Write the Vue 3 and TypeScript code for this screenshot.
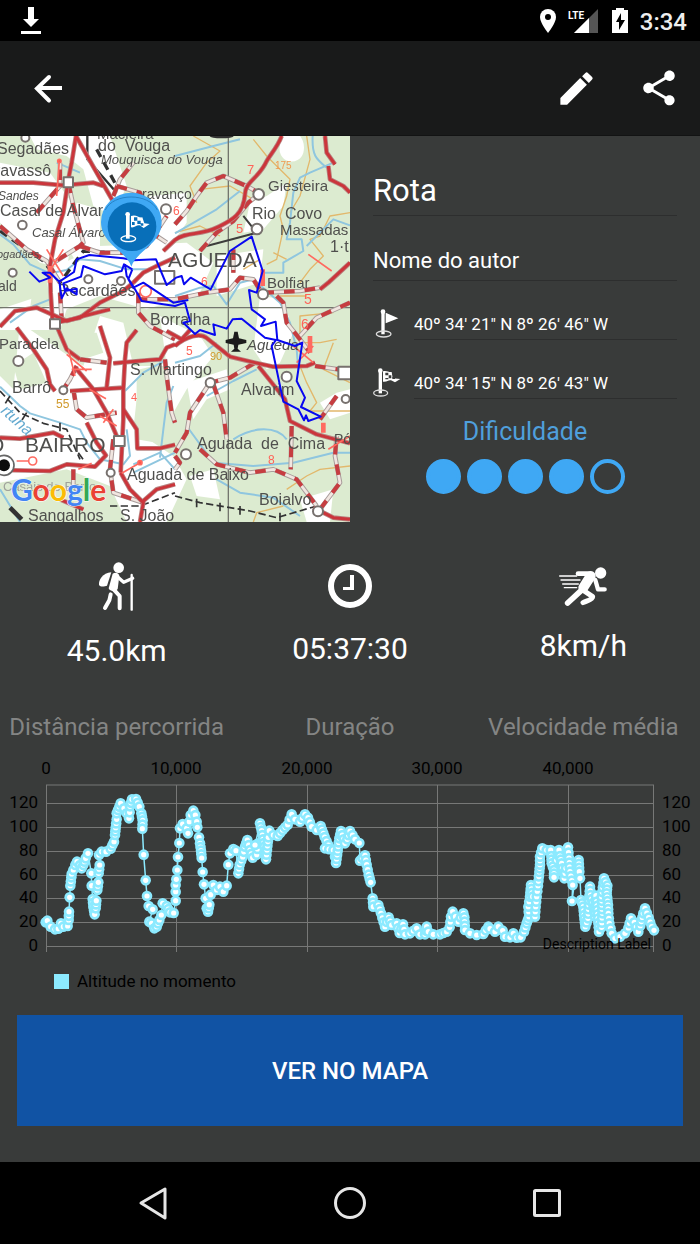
<script setup lang="ts">
import { ref } from 'vue'

interface MapLabel {
  x: number
  y: number
  t: string
  s: number
  c?: string
}

const routeName = ref('Rota')
const author = ref('Nome do autor')
const start = ref('40º 34\' 21" N 8º 26\' 46" W')
const end = ref('40º 34\' 15" N 8º 26\' 43" W')
const difficulty = 4

const labels: MapLabel[] = [
  { x: -3, y: 18, t: 'Segadães', s: 16 },
  { x: -5, y: 40, t: 'ravassô', s: 16 },
  { x: -2, y: 64, t: 'Sandes', s: 12, c: 'it' },
  { x: 0, y: 80, t: 'Casal de Alvar', s: 16 },
  { x: 32, y: 101, t: 'Casal Álvaro', s: 13, c: 'it' },
  { x: 97, y: 3, t: 'Macieira', s: 15 },
  { x: 98, y: 15, t: 'do  Vouga', s: 16 },
  { x: 101, y: 28, t: 'Mouquisca do Vouga', s: 13, c: 'it' },
  { x: 142, y: 63, t: 'ravanço', s: 14 },
  { x: -3, y: 122, t: 'ogadães', s: 11, c: 'it' },
  { x: -2, y: 155, t: 'ald', s: 14 },
  { x: 58, y: 160, t: 'Recardães', s: 16 },
  { x: 150, y: 189, t: 'Borralha', s: 16 },
  { x: 268, y: 55, t: 'Giesteira', s: 15 },
  { x: 252, y: 83, t: 'Rio  Covo', s: 16 },
  { x: 280, y: 99, t: 'Massadas', s: 15 },
  { x: 168, y: 131, t: 'AGUEDA', s: 21 },
  { x: 267, y: 152, t: 'Bolfiar', s: 15 },
  { x: -1, y: 213, t: 'Paradela', s: 15 },
  { x: 12, y: 257, t: 'Barrô', s: 16 },
  { x: 25, y: 316, t: 'BAIRRO', s: 21 },
  { x: -12, y: 316, t: 'O', s: 21 },
  { x: 130, y: 239, t: 'S. Martingo', s: 16 },
  { x: 127, y: 344, t: 'Aguada de Baixo', s: 16 },
  { x: 28, y: 385, t: 'Sangalhos', s: 16 },
  { x: 120, y: 385, t: 'S. João', s: 16 },
  { x: 247, y: 214, t: 'Agueda', s: 15, c: 'it' },
  { x: 241, y: 259, t: 'Alvarim', s: 16 },
  { x: 197, y: 313, t: 'Aguada  de  Cima', s: 16 },
  { x: 334, y: 308, t: 'Pó', s: 14 },
  { x: 259, y: 369, t: 'Boialvo', s: 16 },
  { x: 330, y: 116, t: '1·t', s: 16 },
  { x: 3, y: 355, t: 'Casais do Barro', s: 13, c: 'faint' },
  { x: 56, y: 272, t: '55', s: 12, c: 'gold' },
  { x: 210, y: 224, t: '90', s: 11, c: 'gold' },
  { x: 275, y: 33, t: '175', s: 10, c: 'orange' },
  { x: 304, y: 168, t: '5', s: 14, c: 'red' },
  { x: 301, y: 193, t: '6', s: 14, c: 'red' },
  { x: 236, y: 97, t: '5', s: 13, c: 'red' },
  { x: 247, y: 38, t: '7', s: 13, c: 'red' },
  { x: 201, y: 150, t: '6', s: 12, c: 'red' },
  { x: 268, y: 328, t: '8', s: 12, c: 'red' },
  { x: 186, y: 219, t: '5', s: 12, c: 'red' },
  { x: 173, y: 79, t: '6', s: 12, c: 'red' },
  { x: 131, y: 265, t: '4', s: 11, c: 'red' },
]

const mainRoads: string[] = [
  'M228 0L215 80 205 130 190 230 165 310 150 390 152 470 158 560',
  'M0 140L100 140 190 148 280 140 310 150',
  'M228 0L290 110 330 180 350 215',
  'M845 0C830 40 805 60 795 85C770 130 735 140 735 175C730 240 690 255 650 275C600 300 560 285 525 312L490 345',
  'M0 572L45 525 110 515 200 555 250 540 330 520',
  'M160 562L240 545 300 500 370 465 400 440',
  'M400 440L430 410 470 390 525 365',
  'M525 630C560 600 600 590 620 606L690 662 765 680 820 692 920 690 945 680',
  'M775 690L815 740 855 790 870 855 950 895 1050 922',
  'M50 575L100 640 140 700 150 745 165 765',
  'M170 570L200 640 240 670',
  'M300 570L330 665 320 755',
  'M210 765L370 755',
  'M410 582L380 620 375 670 370 760 370 850 362 1010',
  'M340 682L450 672 480 670 500 635 525 625',
  'M230 700L280 760 320 830 350 900',
  'M370 820L410 880 412 937 480 937 525 926',
  'M260 860L290 920 318 958 285 992 200 985 150 1005 0 1002',
  'M0 905L60 908 160 890 190 905',
  'M362 1010L390 1060 430 1100 420 1158',
  'M430 1095L470 1060 525 1045',
  'M975 0L980 50 1005 85M985 90L990 130 1030 150 1050 170',
  'M1050 380L985 440 960 460',
  'M500 585L545 610 570 582',
  'M180 1090L250 1120',
  'M940 1115L1000 1145 1050 1150',
]

const minorRoads: string[] = [
  'M525 265L560 225 590 180 620 140 670 120 740 150 775 170',
  'M600 345L650 290 700 255 745 200 770 180',
  'M410 490L525 490 620 470 690 460 720 425 760 430 785 470',
  'M830 480L850 500 860 560 900 610 930 650',
  'M765 680L690 725 630 740 590 800 570 830 560 890 525 950',
  'M640 745L670 830 680 910',
  'M875 870L872 1000',
  'M600 940L650 985 750 1010 820 1000 890 1030 950 1110',
  'M960 1120L1020 1040 1005 960 1010 900',
  'M495 670L500 720 515 830 525 860',
  'M220 760L230 820 260 845 350 830',
  'M415 470L415 530 450 570 525 610',
  'M945 690L1015 700',
  'M1050 500L950 545 900 600',
  'M790 470L900 465 960 455',
  'M110 230L180 150 180 80',
  'M205 140L220 210 250 320 240 330 160 380',
  'M240 330L300 350 380 350 440 330 500 240',
  'M340 180L360 130 400 80',
  'M350 150L420 170 440 230 470 300 500 320',
  'M0 270L80 340 140 375 180 440',
  'M220 1000L220 1060',
  'M230 690L210 730 190 760',
  'M240 670L320 680',
  'M340 910L330 1000 340 1070 430 1100',
  'M180 470L185 550',
  'M525 960L540 980 525 1000',
  'M700 340L700 410',
  'M1010 780L960 850',
]

const blues: string[] = [
  'M0 295L40 325 90 385 150 412 200 402 240 370 300 375 380 400 440 400',
  'M0 752L60 810 90 832 180 860 240 880 260 920 300 970 370 985 390 960 380 880',
  'M938 0C935 60 950 70 980 95M1000 80L930 110 900 125 880 170 870 260 860 310 905 310 910 345 850 380 850 410 790 410',
  'M1050 268L1000 250 960 290 920 330',
  'M525 292L650 220 720 165M525 60L640 30 720 10',
  'M525 480L600 455 640 450 680 505 720 440 760 430 840 500 870 560 890 640 895 700',
  'M375 765L430 710 500 670',
  'M480 965L490 880 500 800 520 750',
  'M525 1000L480 950 400 985',
  'M620 780L700 735 770 700',
  'M700 910C760 870 830 870 860 910',
  'M650 1030L720 1070 820 1085 900 1140',
  'M560 870L640 980 760 990 880 980 1000 950 1050 950',
  'M30 560L100 510 150 490M170 80L240 110',
  'M0 1060L60 1158M400 1010L525 950',
  'M525 680L600 660 650 620',
]

const contours: string[] = [
  'M580 0L660 45 620 80 570 150 590 200',
  'M760 10L800 60 870 130 860 180 840 240 850 280 830 370 800 385',
  'M920 0L930 70 900 180 870 230',
  'M600 160L690 150 760 190',
  'M1050 230L990 240 960 300 930 310 970 360 930 400 900 440',
  'M525 290L600 270 660 300',
  'M1000 530L900 540 900 620 960 620 1010 610',
  'M900 690L920 740 950 800 930 825 1050 825',
  'M860 1060L920 1020 960 1000 1050 990',
  'M760 1158L770 1130 850 1110',
  'M840 480L920 480M730 400L780 370M820 350L860 370',
  'M1000 620L970 700 1050 740',
]

const track =
  'M88 407L118 437 150 425 128 410 150 410 178 437 185 487 200 457 230 475 230 458 195 465 190 442 243 422 250 390 315 415 365 405 372 385 397 400 M178 437L222 408 230 370 268 357 370 367 400 373 468 370 500 447 528 425 545 420 552 445 572 425 632 460 690 345 755 302 788 405 770 470 747 462 755 520 795 550 783 570 827 557 832 612 885 630 907 620 890 735 915 785 903 813 962 842 925 855 918 838 912 853 895 820 850 797 815 630 828 612 795 605 725 548 698 550 680 578 640 565 645 597 600 582 585 594 550 560 570 555 555 500 525 510 425 495 405 460 380 420 375 385 M397 400L385 430 400 455 430 440 520 500 565 492'

/* Recorded track altitude: [x, y] samples in thirds of a chart unit. */
const profile: number[][] = [
  [137,517],[142,512],[152,530],[165,538],[175,536],[183,520],[190,530],[203,528],[206,510],[207,485],[209,442],[211,407],[214,382],[215,372],[220,360],[226,345],[231,335],[240,345],[245,355],[250,345],[257,325],[264,310],
  [274,370],[275,407],[278,447],[280,470],[284,493],[287,475],[289,452],[292,420],[295,397],[296,370],[299,345],[297,315],[305,305],[318,305],[332,296],[342,275],[345,255],[347,233],[350,208],[350,190],[358,170],[362,160],[372,175],[380,190],[387,205],[389,187],[390,169],[396,148],[408,147],[418,170],[424,190],[428,211],[427,236],[431,314],[437,391],[441,438],[446,468],[458,478],[448,515],[455,520],[463,535],[470,530],[478,510],[484,495],[488,460],[500,468],[510,487],[521,489],[527,452],[527,425],[527,405],[529,388],[532,360],[534,321],[538,279],[540,235],[548,222],[560,235],[564,250],[568,215],[572,195],[580,182],[586,195],[590,215],[592,232],[597,262],[600,280],[603,302],[605,324],[608,366],[612,403],[617,445],[620,475],[624,485],[628,464],[632,434],[640,405],[650,420],[660,410],[670,425],[680,407],[685,344],[690,310],[700,297],[708,302],[715,370],[719,344],[728,321],[735,290],[742,270],[750,300],[758,323],[770,314],[775,280],[765,285],[780,220],[785,242],[789,268],[793,290],[798,328],[801,300],[805,262],[808,242],[820,255],[833,258],[848,240],[863,224],[875,193],[885,208],[900,215],[915,193],[924,203],[935,230],[950,240],[962,228],[974,261],[985,285],[975,295],[1000,300],[1005,320],[1008,339],[1013,302],[1018,265],[1023,243],[1035,280],[1042,268],[1050,243],
  [1065,268],[1078,279],[1080,332],[1095,316],[1100,344],[1106,374],[1112,397],[1118,445],[1120,470],[1135,465],[1143,490],[1155,530],[1166,502],[1175,525],[1190,520],[1199,549],[1209,523],[1215,553],[1230,550],[1250,535],[1260,553],[1275,553],[1280,530],[1285,545],[1300,553],[1320,553],[1340,545],[1349,532],[1353,500],[1358,485],[1375,515],[1390,490],[1393,502],[1395,540],[1410,550],[1430,555],[1450,552],[1465,530],[1470,536],[1485,545],[1495,530],[1508,542],[1515,560],[1530,562],[1540,550],[1550,563],[1562,562],[1572,545],[1580,520],[1587,500],[1585,470],[1590,440],[1593,405],[1598,440],[1605,500],[1607,470],[1610,440],[1614,407],[1618,366],[1620,344],[1620,320],[1627,295],[1640,300],[1652,300],[1654,318],[1655,340],[1662,360],[1662,382],[1670,330],[1677,300],[1680,318],[1685,340],[1693,385],[1698,355],[1704,292],[1707,324],[1710,365],[1718,405],[1716,453],[1730,350],[1736,330],[1738,365],[1740,385],[1743,450],[1750,470],[1752,495],[1756,530],[1764,505],[1770,410],[1772,435],[1778,460],[1785,500],[1788,437],[1790,455],[1792,480],[1797,545],[1805,532],[1807,490],[1805,440],[1812,385],[1822,407],[1820,430],[1824,465],[1825,490],[1828,520],[1835,550],[1845,565],[1860,560],[1875,550],[1885,534],[1893,505],[1903,517],[1915,545],[1921,527],[1930,490],[1935,475],[1946,503],[1955,530],[1962,541],
]

const samples: number[][] = []
profile.forEach((p, i) => {
  if (i > 0) {
    const q = profile[i - 1]
    const d = Math.hypot(p[0] - q[0], p[1] - q[1])
    const steep = Math.abs(p[1] - q[1]) > 26 && p[0] < 720
    const n = steep || (d > 46 && p[0] < 1760) ? 1 : Math.max(1, Math.round(d / 14))
    for (let k = 1; k < n; k++) {
      samples.push([q[0] + ((p[0] - q[0]) * k) / n, q[1] + ((p[1] - q[1]) * k) / n])
    }
  }
  samples.push(p)
})
const dots = samples.map(([x, y]) => ({ x: x / 3, y: y / 3 }))
const line = dots.map((d) => `${d.x},${d.y}`).join(' ')

const xTicks = [
  { x: 46, t: '0' },
  { x: 176, t: '10,000' },
  { x: 307, t: '20,000' },
  { x: 437, t: '30,000' },
  { x: 568, t: '40,000' },
]
const yTicks = [
  { y: 53, t: '120' },
  { y: 77, t: '100' },
  { y: 101, t: '80' },
  { y: 125, t: '60' },
  { y: 148, t: '40' },
  { y: 172, t: '20' },
  { y: 196, t: '0' },
]
</script>

<template>
  <div class="screen">
    <div class="status">
      <svg class="dl" width="20" height="28" viewBox="0 0 20 28" aria-hidden="true">
        <path d="M7 0h6v12h5l-8 8-8-8h5z M0 24h20v3H0z" fill="#fff" />
      </svg>
      <svg class="sys" width="90" height="26" viewBox="0 0 90 26" aria-hidden="true">
        <path d="M9 1a8 8 0 0 0-8 8c0 6 8 16 8 16s8-10 8-16a8 8 0 0 0-8-8z" fill="#fff" />
        <circle cx="9" cy="9" r="3" fill="#000" />
        <path d="M59 1V25H35z" fill="#555" />
        <path d="M29 0h17v13H29z" fill="#000" />
        <path d="M50 10V25H35z" fill="#fff" />
        <text x="29" y="11" class="lte">LTE</text>
        <path d="M73 2h4V0h8v2h4v23H73z" fill="#fff" />
        <path d="M82 5l-5 9h3v8l6-10h-4z" fill="#000" />
      </svg>
      <span class="clock">3:34</span>
    </div>

    <header class="toolbar">
      <button class="icon-btn" aria-label="Voltar">
        <svg width="42" height="42" viewBox="0 0 42 42">
          <path d="M35 21H10" stroke="#fff" stroke-width="4" />
          <path d="M22 10L10 21.500l12 12" fill="none" stroke="#fff" stroke-width="4" stroke-linecap="round" />
        </svg>
      </button>
      <div class="actions">
        <button class="icon-btn" aria-label="Editar">
          <svg width="43" height="43" viewBox="0 0 24 24">
            <path fill="#fff" d="M3 17.25V21h3.75L17.81 9.94l-3.75-3.75L3 17.25zM20.71 7.04a1 1 0 0 0 0-1.41l-2.34-2.34a1 1 0 0 0-1.41 0l-1.83 1.83 3.75 3.75 1.83-1.83z" />
          </svg>
        </button>
        <button class="icon-btn" aria-label="Partilhar">
          <svg width="42" height="42" viewBox="0 0 24 24">
            <path fill="#fff" d="M18 16.08c-.76 0-1.44.3-1.96.77L8.91 12.7c.05-.23.09-.46.09-.7s-.04-.47-.09-.7l7.05-4.11c.54.5 1.25.81 2.04.81 1.66 0 3-1.34 3-3s-1.34-3-3-3-3 1.34-3 3c0 .24.04.47.09.7L8.04 9.81C7.5 9.31 6.79 9 6 9c-1.66 0-3 1.34-3 3s1.34 3 3 3c.79 0 1.5-.31 2.04-.81l7.12 4.16c-.05.21-.08.43-.08.65 0 1.61 1.31 2.92 2.92 2.92s2.92-1.31 2.92-2.92-1.31-2.92-2.92-2.92z" />
          </svg>
        </button>
      </div>
    </header>

    <main class="content">
      <section class="summary">
        <svg class="map" viewBox="0 0 350 386" preserveAspectRatio="xMidYMid slice" role="img" aria-label="Mapa da rota">
          <defs>
            <filter id="soft" x="0" y="0" width="1" height="1"><feGaussianBlur stdDeviation="0.6" /></filter>
          </defs>
          <rect width="350" height="386" fill="#dcebd0" />
          <g filter="url(#soft)">
            <g transform="scale(.33333)" fill="none" stroke-linejoin="round">
              <g fill="#fff">
                <path d="M90 0H330L380 150 340 240 280 210 250 100 200 60 110 40z" />
                <path d="M0 80L150 110 230 220 200 400 120 380 0 260z" />
                <path d="M230 200L300 220 300 350 230 380 200 330z" />
                <path d="M150 400L300 330 560 320 640 380 600 470 440 520 300 480 200 520 180 582 0 582 0 520 120 480z" />
                <path d="M60 560L250 690 300 540 370 560 400 690 500 690 480 540 600 600 640 660 560 760 520 830 500 680 420 700 400 880 520 960 560 1030 500 1158 380 1158 330 1050 200 1000 0 1040 0 720 40 760z" />
                <path d="M840 20a35 45 0 1 1 70 30a35 35 0 0 1-70-20zM800 180L860 140 850 210 790 280 730 290 750 200z" />
                <path d="M780 480L850 490 880 590 840 680 800 700 760 640zM560 740L680 700 690 760 620 790 580 850z" />
                <path d="M570 1020L640 1000 660 1090 590 1080zM960 800L1010 770 1050 760V830L990 850zM900 1090L1000 1060 990 1158H920z" />
                <path d="M450 180L560 170 560 260 510 330 440 330z M650 360L790 340 780 440 650 480z" />
              </g>
              <path fill="#dcebd0" d="M40 690L100 650 140 740 60 760zM230 590h60l20 60-60 20zM410 730l70-40 30 120-40 110-60-10zM40 1050l130-20 70 60-110 50zM100 440l40-20 10 90-60 10z" />
              <path v-for="d in contours" :key="d" :d="d" stroke="#e2b86c" stroke-width="4" />
              <path v-for="d in blues" :key="d" :d="d" stroke="#8fc6df" stroke-width="6" />
              <path d="M685 0V1158M0 515H1050" stroke="#73766e" stroke-width="4" />
              <path d="M620 330L770 290 730 240" stroke="#3d3d3b" stroke-width="6" />
              <g stroke="#333" stroke-width="7">
                <path d="M262 0V70L350 170" />
                <path d="M290 40L350 150M0 285L130 375 180 440 250 345 370 350" stroke-width="10" stroke-dasharray="26 18" />
                <path d="M525 1080L600 1100 750 1125 830 1145 950 1110M0 765L60 830 130 862 200 880 240 970M330 1110H420L525 1070" stroke-width="5" stroke-dasharray="22 10" />
                <path d="M590 1088v26M660 1100v26M720 1110v26M840 1130v26M30 780l-14 22M80 830l-14 22M180 860v26M235 950l14 20" stroke-width="5" />
                <path d="M30 1115L65 1150" stroke-width="14" />
              </g>
              <g>
                <path v-for="d in minorRoads" :key="d" :d="d" stroke="#a89c9a" stroke-width="14" />
                <path v-for="d in minorRoads" :key="d + 'w'" :d="d" stroke="#f1e6e0" stroke-width="8" />
                <path v-for="d in minorRoads" :key="d + 'r'" :d="d" stroke="#c63c40" stroke-width="12" stroke-dasharray="32 30" />
              </g>
              <path v-for="d in mainRoads" :key="d" :d="d" stroke="#b88482" stroke-width="14" />
              <path v-for="d in mainRoads" :key="d + 'r'" :d="d" stroke="#cb363b" stroke-width="9" />
              <g stroke="#ff6a60" stroke-width="5">
                <path d="M178 75L170 180M50 975H85M365 1012L420 980M268 760l50 28M200 655l60 50M215 700h60M300 840l50 30M310 860l30-40M985 940l65-40M925 355l70 50M140 340l50 80M140 420l50-80M235 1000l40-18M205 640l20 80M880 630l60 50M940 630l-50 50" />
                <circle cx="98" cy="975" r="12" fill="#fff" />
                <circle cx="437" cy="466" r="17" fill="#fff" />
                <circle cx="178" cy="75" r="5" fill="#ff554b" /><circle cx="420" cy="980" r="6" fill="#ff554b" />
                <path d="M788 400v50M930 600v50M970 860v30M150 390v50" stroke-width="14" />
              </g>
              <g stroke="#77716e" stroke-width="6" fill="#fff">
                <path d="M191 124h28v30h-28zM150 550h30v28h-30zM342 900h32v30h-32z" />
                <circle cx="776" cy="175" r="16" /><circle cx="771" cy="279" r="16" /><circle cx="789" cy="475" r="15" />
                <circle cx="67" cy="267" r="13" /><circle cx="498" cy="220" r="15" /><circle cx="860" cy="722" r="15" />
                <circle cx="631" cy="740" r="14" /><circle cx="954" cy="1126" r="15" /><circle cx="190" cy="763" r="12" />
                <circle cx="363" cy="435" r="12" /><circle cx="38" cy="410" r="12" /><circle cx="265" cy="430" r="12" />
                <circle cx="558" cy="955" r="15" /><circle cx="332" cy="1010" r="12" /><circle cx="1037" cy="789" r="12" />
                <circle cx="55" cy="675" r="15" /><circle cx="76" cy="5" r="12" />
                <path d="M465 405h58v38h-58zM1015 692h50v38h-50z" />
              </g>
              <circle cx="12" cy="988" r="30" fill="#fff" stroke="#666" stroke-width="5" />
              <circle cx="12" cy="988" r="18" fill="#111" />
              <ellipse cx="665" cy="0" rx="36" ry="7" fill="#333" />
              <path fill="#1c1c1c" d="M703 587h10l4 20 22 5v9l-24 5-2 12 10 9h-30l10-9-2-12-24-5v-9l22-5z" />
            </g>
            <text v-for="l in labels" :key="l.t + l.x + l.y" :x="l.x" :y="l.y" :font-size="l.s" :class="['place', l.c]">{{ l.t }}</text>
            <text class="place river" font-size="16" transform="translate(0 276) rotate(42)">rtuna</text>
          </g>
          <g transform="scale(.33333)">
            <path :d="track" fill="none" stroke="#0808f0" stroke-width="6" stroke-linejoin="round" />
            <path d="M394 392C380 345 303 325 303 258a91 88 0 0 1 182 0C485 325 408 345 394 392z" fill="#3fa8f4" />
            <path d="M316 222C340 170 446 170 472 222" fill="none" stroke="#2583c8" stroke-width="3" />
            <circle cx="396" cy="272" r="73" fill="#086fb9" />
            <g fill="#fff">
              <circle cx="383" cy="235" r="7" />
              <path d="M378 238h11v70h-11z" />
              <path d="M393 240c16-6 22 6 34 4l6 18 16 2-18 12-12-8c-10-2-14 8-26 6z" />
              <path fill="#086fb9" d="M402 244h10v10h-10zM412 254h10v10h-10zM396 258h8v9h-8zM422 262h8v7h-8z" />
            </g>
            <ellipse cx="385" cy="308" rx="22" ry="9" fill="none" stroke="#fff" stroke-width="4" />
          </g>
          <text class="google" x="11" y="365" font-size="30"><tspan fill="#4285f4">G</tspan><tspan fill="#ea4335">o</tspan><tspan fill="#fbbc05">o</tspan><tspan fill="#4285f4">g</tspan><tspan fill="#34a853">l</tspan><tspan fill="#ea4335">e</tspan></text>
        </svg>

        <div class="details">
          <input v-model="routeName" class="field title" type="text" aria-label="Nome da rota" />
          <input v-model="author" class="field author" type="text" aria-label="Autor" />
          <div class="coord">
            <svg width="41" height="30" viewBox="0 0 123 90" aria-hidden="true">
              <circle cx="30" cy="8" r="7" fill="#fff" />
              <path d="M25 8h10v68H25zM38 11l38 17-38 15z" fill="#fff" />
              <ellipse cx="32" cy="75" rx="22" ry="9" fill="none" stroke="#ddd" stroke-width="4" />
            </svg>
            <input v-model="start" class="field small" type="text" aria-label="Ponto de partida" />
          </div>
          <div class="coord">
            <svg width="41" height="30" viewBox="0 0 123 90" aria-hidden="true">
              <circle cx="22" cy="8" r="7" fill="#fff" />
              <path d="M17 8h10v68H17z" fill="#fff" />
              <path d="M30 10c10-4 18 4 26 2l3 19 23 2-16 10-12-6c-8-2-12 6-24 4z" fill="#fff" />
              <path d="M37 14h9v8h-9zM47 22h8v9h-8zM37 30h9v4h-9zM58 27h8v6h-8z" fill="#393b3a" />
              <ellipse cx="23" cy="75" rx="21" ry="9" fill="none" stroke="#ddd" stroke-width="4" />
            </svg>
            <input v-model="end" class="field small" type="text" aria-label="Ponto de chegada" />
          </div>
          <h2 class="level">Dificuldade</h2>
          <div class="rating" role="img" aria-label="4 de 5">
            <span v-for="n in 5" :key="n" :class="['dot', { on: n <= difficulty }]"></span>
          </div>
        </div>
      </section>

      <section class="stats">
        <div class="stat">
          <svg width="44" height="52" viewBox="285 45 132 156" aria-hidden="true">
            <g fill="none" stroke="#fff" stroke-linecap="round" stroke-linejoin="round">
              <circle cx="356" cy="68" r="16" fill="#fff" stroke="none" />
              <path d="M334 82C308 84 295 106 297 120c5 8 18 4 24 2z" fill="#fff" stroke="none" />
              <path d="M338 86c8-6 18-3 20 6l-5 40c-4 8-24 8-27-2z" fill="#fff" stroke="none" />
              <path d="M350 93L371 112 398 100" stroke-width="10" />
              <path d="M338 130L359 153V190" stroke-width="12" />
              <path d="M332 148L328 166 315 189" stroke-width="12" />
              <path d="M395 90V194" stroke-width="7" />
            </g>
          </svg>
          <span class="value">45.0km</span>
          <span class="caption">Distância percorrida</span>
        </div>
        <div class="stat">
          <svg width="50" height="50" viewBox="0 0 50 50" aria-hidden="true">
            <circle cx="25" cy="26" r="19" fill="none" stroke="#fff" stroke-width="6" />
            <path d="M25 15h4v15H18v-3h7z" fill="#fff" />
          </svg>
          <span class="value">05:37:30</span>
          <span class="caption">Duração</span>
        </div>
        <div class="stat">
          <svg width="50" height="47" viewBox="624 45 150 141" aria-hidden="true">
            <g fill="none" stroke="#fff" stroke-linecap="round" stroke-linejoin="round">
              <circle cx="752" cy="84" r="17" fill="#fff" stroke="none" />
              <path d="M684 86H718" stroke-width="14" />
              <path d="M722 93L700 128" stroke-width="30" />
              <path d="M736 105L744 133H764" stroke-width="13" />
              <path d="M694 136L653 174" stroke-width="17" />
              <path d="M700 136L728 155C728 164 712 166 699 173" stroke-width="15" />
              <path d="M629 93H680M633 105H690M638 117H685M643 128H680" stroke-width="4" />
            </g>
          </svg>
          <span class="value">8km/h</span>
          <span class="caption">Velocidade média</span>
        </div>
      </section>

      <svg class="chart" viewBox="0 0 700 250" role="img" aria-label="Altitude no momento">
        <g class="grid">
          <path d="M46 35H654" />
          <path v-for="t in yTicks" :key="t.y" :d="`M46 ${t.y}.5H654`" />
          <path v-for="t in xTicks" :key="t.x" :d="`M${t.x}.5 35V202`" />
          <path d="M653.5 35V202" />
        </g>
        <polyline :points="line" fill="none" stroke="#8ceaff" stroke-width="1.5" />
        <g v-for="(d, i) in dots" :key="i">
          <circle :cx="d.x" :cy="d.y" r="5.3" fill="#8ceaff" />
          <circle :cx="d.x" :cy="d.y" r="2.6" fill="#fff" />
        </g>
        <text v-for="t in xTicks" :key="t.t" :x="t.x" y="24" class="tick mid">{{ t.t }}</text>
        <text v-for="t in yTicks" :key="'l' + t.t" x="38" :y="t.y + 5" class="tick right">{{ t.t }}</text>
        <text v-for="t in yTicks" :key="'r' + t.t" x="662" :y="t.y + 5" class="tick">{{ t.t }}</text>
        <text x="651" y="199" class="desc">Description Label</text>
        <rect x="54" y="224" width="15" height="15" fill="#8ceaff" />
        <text x="77" y="237" class="tick">Altitude no momento</text>
      </svg>

      <button class="cta">VER NO MAPA</button>
    </main>

    <nav class="nav">
      <button class="icon-btn" aria-label="Anterior">
        <svg width="34" height="36" viewBox="0 0 34 36"><path d="M29 4v29L5 18z" fill="none" stroke="#e6e6e6" stroke-width="3" stroke-linejoin="round" /></svg>
      </button>
      <button class="icon-btn" aria-label="Início">
        <svg width="34" height="36" viewBox="0 0 34 36"><circle cx="17" cy="18" r="14.5" fill="none" stroke="#e6e6e6" stroke-width="3" /></svg>
      </button>
      <button class="icon-btn" aria-label="Recentes">
        <svg width="34" height="36" viewBox="0 0 34 36"><rect x="4.5" y="5.5" width="25" height="25" rx="1" fill="none" stroke="#e6e6e6" stroke-width="3" /></svg>
      </button>
    </nav>
  </div>
</template>

<style>
body {
  margin: 0;
  background: #000;
}
</style>

<style scoped>
.screen {
  min-height: 100vh;
  display: flex;
  flex-direction: column;
  background: #393b3a;
  color: #fff;
  font-family: Roboto, "Liberation Sans", sans-serif;
}
.status {
  display: flex;
  align-items: center;
  height: 41px;
  padding: 0 13px 0 21px;
  background: #000;
}
.sys {
  margin-left: auto;
}
.lte {
  font-family: Roboto, sans-serif;
  font-size: 10px;
  font-weight: 700;
  fill: #fff;
}
.clock {
  margin-left: 11px;
  font-size: 24px;
  line-height: 40px;
  padding-top: 2px;
  font-weight: 500;
  color: #eee;
}
.toolbar {
  display: flex;
  justify-content: space-between;
  align-items: center;
  height: 94px;
  padding: 0 20px 0 27px;
  background: #191a1a;
  border-bottom: 1px solid #121313;
}
.actions {
  display: flex;
  gap: 40px;
}
.icon-btn {
  display: block;
  padding: 0;
  border: 0;
  background: none;
  line-height: 0;
}
.content {
  flex: 1;
  display: flex;
  flex-direction: column;
}
.summary {
  display: grid;
  grid-template-columns: 1fr 1fr;
}
.map {
  display: block;
  width: 100%;
  height: 100%;
  min-height: 386px;
}
.place {
  font-family: "Liberation Sans", sans-serif;
  fill: #50504e;
  white-space: pre;
}
.it {
  font-style: italic;
}
.faint {
  fill: #a0a29c;
}
.gold {
  fill: #d09a2c;
}
.orange {
  fill: #f09a50;
}
.red {
  fill: #ff6358;
}
.river {
  fill: #63a9cf;
  font-style: italic;
}
.google {
  font-family: Lato, sans-serif;
  font-weight: 700;
  stroke: #fff;
  stroke-width: 1px;
  paint-order: stroke;
}
.details {
  padding: 30px 23px 27px;
}
.field {
  display: block;
  box-sizing: border-box;
  width: 100%;
  min-width: 0;
  padding: 0;
  border: 0;
  border-bottom: 1px solid #2d2e2e;
  border-radius: 0;
  background: none;
  color: #fff;
  font-family: inherit;
  outline: none;
}
.title {
  height: 50px;
  font-size: 31px;
}
.author {
  height: 40px;
  margin-top: 25px;
  font-size: 22px;
}
.coord {
  display: flex;
  align-items: center;
  margin-top: 27px;
}
.coord svg {
  flex: none;
}
.small {
  height: 32px;
  font-size: 17px;
}
.level {
  margin: 16px 0 10px;
  font-size: 25px;
  line-height: 34px;
  font-weight: 400;
  text-align: center;
  color: #4f9fdc;
}
.rating {
  display: flex;
  justify-content: center;
  gap: 6px;
}
.dot {
  box-sizing: border-box;
  width: 35px;
  height: 35px;
  border: 4px solid #3fa8f4;
  border-radius: 50%;
}
.on {
  background: #3fa8f4;
}
.stats {
  display: grid;
  grid-template-columns: repeat(3, 1fr);
  padding: 38px 0 8px;
}
.stat {
  display: flex;
  flex-direction: column;
  align-items: center;
}
.value {
  margin-top: 19px;
  font-size: 30px;
  line-height: 40px;
}
.caption {
  margin-top: auto;
  padding-top: 41px;
  font-size: 24px;
  line-height: 30px;
  color: #848584;
  white-space: nowrap;
}
.chart {
  display: block;
  width: 100%;
}
.grid {
  fill: none;
  stroke: #777877;
  stroke-width: 1px;
}
.tick {
  font-size: 17px;
  fill: #000;
}
.mid {
  text-anchor: middle;
}
.right {
  text-anchor: end;
}
.desc {
  font-size: 14px;
  fill: #000;
  text-anchor: end;
}
.cta {
  margin: 15px 17px 36px;
  height: 111px;
  padding: 0;
  border: 0;
  background: #1153a4;
  color: #fff;
  font-family: inherit;
  font-size: 24px;
  font-weight: 500;
}
.nav {
  display: flex;
  justify-content: space-between;
  align-items: center;
  height: 82px;
  padding: 0 136px;
  background: #000;
}
</style>
